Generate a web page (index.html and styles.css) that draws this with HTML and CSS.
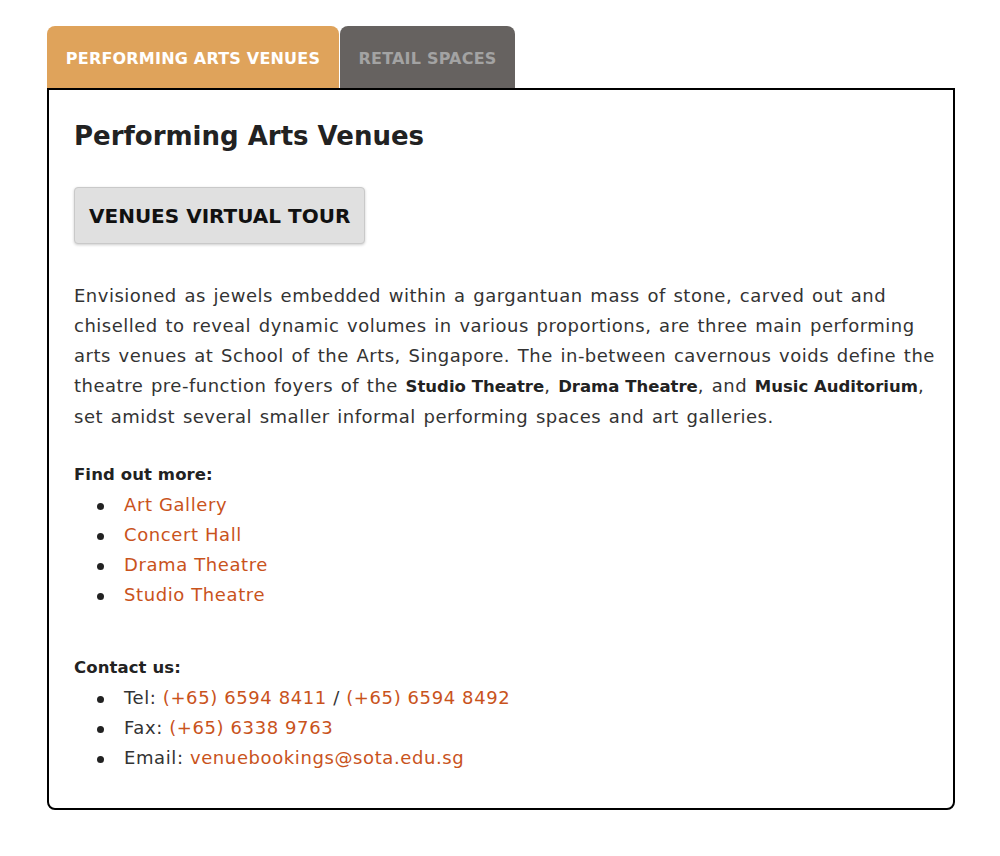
FILE: index.html
```html
<!DOCTYPE html>
<html>
<head>
<meta charset="utf-8">
<link rel="stylesheet" href="styles.css">
</head>
<body>
<div class="page">
  <div class="tabs">
    <div class="tab tab-active">PERFORMING ARTS VENUES</div>
    <div class="tab tab-inactive">RETAIL SPACES</div>
  </div>
  <div class="panel">
    <h1 class="title">Performing Arts Venues</h1>
    <div class="btn">VENUES VIRTUAL TOUR</div>
    <p class="intro">Envisioned as jewels embedded within a gargantuan mass of stone, carved out and chiselled to reveal dynamic volumes in various proportions, are three main performing arts venues at School of the Arts, Singapore. The in-between cavernous voids define the theatre pre-function foyers of the <b>Studio Theatre</b>, <b>Drama Theatre</b>, and <b>Music Auditorium</b>, set amidst several smaller informal performing spaces and art galleries.</p>
    <div class="label">Find out more:</div>
    <ul class="list list-more">
      <li><a href="#">Art Gallery</a></li>
      <li><a href="#">Concert Hall</a></li>
      <li><a href="#">Drama Theatre</a></li>
      <li><a href="#">Studio Theatre</a></li>
    </ul>
    <div class="label">Contact us:</div>
    <ul class="list">
      <li>Tel: <a href="#">(+65) 6594 8411</a> / <a href="#">(+65) 6594 8492</a></li>
      <li>Fax: <a href="#">(+65) 6338 9763</a></li>
      <li>Email: <a href="#">venuebookings@sota.edu.sg</a></li>
    </ul>
  </div>
</div>
</body>
</html>
```
FILE: styles.css
```css
html, body {
  margin: 0;
  padding: 0;
  background: #ffffff;
}
body {
  font-family: "DejaVu Sans", "Liberation Sans", sans-serif;
  color: #333333;
}
.page {
  padding: 26px 0 0 47px;
  width: 908px;
}
.tabs {
  display: flex;
  gap: 1px;
}
.tab {
  height: 62px;
  display: flex;
  align-items: center;
  justify-content: center;
  font-size: 16px;
  font-weight: bold;
  border-radius: 8px 8px 0 0;
  box-sizing: border-box;
  padding-top: 2px;
  letter-spacing: 0.2px;
}
.tab-active {
  width: 292px;
  background: #dfa35b;
  color: #ffffff;
}
.tab-inactive {
  width: 175px;
  background: #666260;
  color: #a3a3a3;
}
.panel {
  border: 2px solid #000000;
  border-radius: 0 0 8px 8px;
  padding: 25px 18px 36px 25px;
  box-sizing: border-box;
  height: 722px;
}
.title {
  margin: 0;
  font-size: 26px;
  line-height: 42px;
  font-weight: bold;
  color: #222222;
}
.btn {
  display: inline-block;
  margin-top: 30px;
  height: 57px;
  box-sizing: border-box;
  padding: 0 14px;
  line-height: 56px;
  background: #e0e0e0;
  border: 1px solid #c9c9c9;
  border-radius: 4px;
  box-shadow: 0 1px 3px rgba(0,0,0,0.2);
  font-size: 20px;
  font-weight: bold;
  color: #111111;
}
.intro {
  margin: 37px 0 28px 0;
  font-size: 18px;
  line-height: 30px;
  letter-spacing: 0.5px;
  word-spacing: 1.5px;
}
.intro b {
  font-size: 16.5px;
  letter-spacing: 0;
  word-spacing: 0;
  color: #222222;
}
.label {
  font-size: 16.5px;
  font-weight: bold;
  line-height: 30px;
  letter-spacing: 0.1px;
  color: #222222;
}
.list {
  margin: 0;
  padding: 0;
  list-style: none;
  font-size: 18px;
  line-height: 30px;
  letter-spacing: 0.6px;
}
.list li {
  padding-left: 23px;
}
.list li::before {
  content: "";
  display: inline-block;
  width: 7px;
  height: 7px;
  border-radius: 50%;
  background: #222222;
  margin-right: 20px;
  vertical-align: middle;
}
.list-more {
  margin-bottom: 43px;
}
.list a {
  color: #c9531c;
  text-decoration: none;
}
```
